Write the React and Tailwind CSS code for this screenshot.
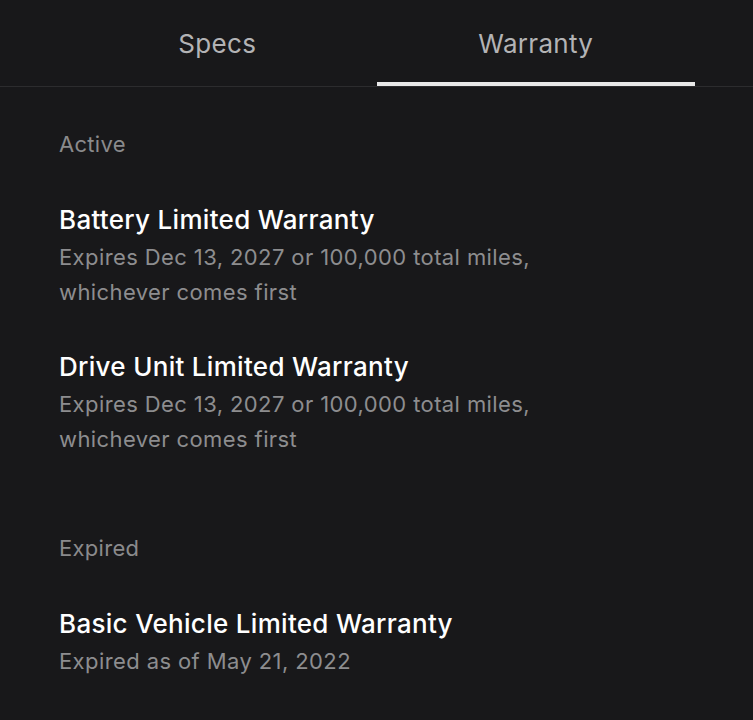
import React from 'react';

const warranties = {
    active: [
        {
            title: 'Battery Limited Warranty',
            detail: 'Expires Dec 13, 2027 or 100,000 total miles, whichever comes first',
        },
        {
            title: 'Drive Unit Limited Warranty',
            detail: 'Expires Dec 13, 2027 or 100,000 total miles, whichever comes first',
        },
    ],
    expired: [
        {
            title: 'Basic Vehicle Limited Warranty',
            detail: 'Expired as of May 21, 2022',
        },
    ],
};

function WarrantyItem({ title, detail }) {
    return (
        <div>
            <p className="text-[26px] leading-[32px] tracking-[0.3px] text-white font-medium">{title}</p>
            <p className="mt-[4px] w-[500px] text-[22px] leading-[35px] tracking-[0.4px] text-[#8d8d8f]">{detail}</p>
        </div>
    );
}

export default function App() {
    return (
        <div
            className="min-h-[720px] w-full bg-[#18181a] text-white"
            style={{ fontFamily: 'Inter, "Noto Sans", sans-serif' }}
        >
            {/* Tabs */}
            <div className="border-b border-[#2c2c2e]">
                <div className="grid grid-cols-2 px-[58px]">
                    <button className="h-[86px] text-[26px] tracking-[0.3px] text-[#b3b3b5]">Specs</button>
                    <button className="relative h-[86px] text-[26px] tracking-[0.3px] text-[#b3b3b5]">
                        Warranty
                        <span className="absolute bottom-0 left-0 right-0 h-[4px] bg-[#e8e8e8]" />
                    </button>
                </div>
            </div>

            {/* Content */}
            <div className="px-[59px] pt-[43px]">
                <p className="text-[22px] leading-[28px] tracking-[0.3px] text-[#8a8a8c]">Active</p>
                <div className="mt-[46px] flex flex-col gap-[41px]">
                    {warranties.active.map((w) => (
                        <WarrantyItem key={w.title} {...w} />
                    ))}
                </div>

                <p className="mt-[77px] text-[22px] leading-[28px] tracking-[0.3px] text-[#8a8a8c]">Expired</p>
                <div className="mt-[46px] flex flex-col">
                    {warranties.expired.map((w) => (
                        <WarrantyItem key={w.title} {...w} />
                    ))}
                </div>
            </div>
        </div>
    );
}
